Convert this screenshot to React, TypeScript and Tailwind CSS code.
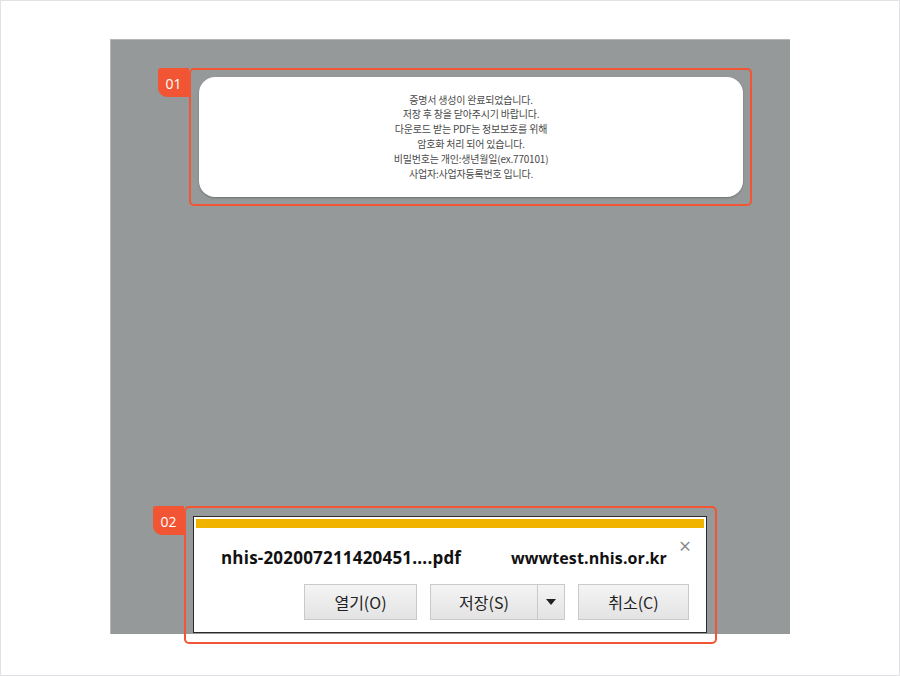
import React from "react";

const KR = { fontFamily: '"Noto Sans CJK KR", "Noto Sans", sans-serif' };
const UI = { fontFamily: '"Open Sans", "Noto Sans CJK KR", sans-serif' };

function Badge({ label }: { label: string }) {
  return (
    <div
      className="absolute -top-[2px] -left-[33px] w-[31px] h-[29px] bg-[#f25533] rounded-tl-[3px] rounded-bl-[9px] flex items-center justify-center text-white text-[14px] pt-[1px]"
      style={UI}
    >
      {label}
    </div>
  );
}

function DialogButton({ label, className = "" }: { label: string; className?: string }) {
  return (
    <div
      className={
        "h-[36px] border border-[#c9c9c9] bg-gradient-to-b from-[#f4f4f4] to-[#e3e3e3] flex items-center justify-center text-[16px] text-[#222] " +
        className
      }
      style={KR}
    >
      {label}
    </div>
  );
}

export default function App() {
  const lines = [
    "증명서 생성이 완료되었습니다.",
    "저장 후 창을 닫아주시기 바랍니다.",
    "다운로드 받는 PDF는 정보보호를 위해",
    "암호화 처리 되어 있습니다.",
    "비밀번호는 개인:생년월일(ex.770101)",
    "사업자:사업자등록번호 입니다.",
  ];

  return (
    <div className="w-[900px] h-[676px] bg-white border border-[#e2e2e4] pt-[38px] pl-[109px] overflow-hidden">
      <div className="relative w-[680px] h-[595px] bg-[#969999] border-t border-l border-[#b4b6b6]">
        {/* 01 - message card */}
        <div className="relative ml-[78px] mt-[28px] w-[563px] h-[138px] border-2 border-[#f25533] rounded-[5px] pt-[7px] pl-[8px] pr-[7px]">
          <Badge label="01" />
          <div
            className="h-[120px] bg-white rounded-[16px] shadow-[0_1px_2px_rgba(0,0,0,0.25)] flex flex-col items-center justify-center text-[10px] leading-[14.8px] text-[#4a4a4a] tracking-[-0.2px]"
            style={KR}
          >
            {lines.map((l) => (
              <div key={l}>{l}</div>
            ))}
          </div>
        </div>

        {/* 02 - download bar */}
        <div className="relative ml-[73px] mt-[300px] w-[533px] h-[138px] border-2 border-[#f25533] rounded-[5px] pt-[8px] pl-[7px]">
          <Badge label="02" />
          <div className="w-[514px] h-[117px] bg-white border border-[#2a2a2a] p-[1px] flex flex-col">
            <div className="h-[9px] bg-[#f0b400] mx-[1px] mt-[1px]" />
            <div className="relative flex items-center justify-between pl-[26px] pr-[38px] h-[40px] mt-[10px]">
              <span className="font-bold text-[17px] text-[#111] tracking-[0.2px]" style={UI}>
                nhis-202007211420451....pdf
              </span>
              <span className="font-bold text-[16px] text-[#111] tracking-[0.1px]" style={UI}>
                wwwtest.nhis.or.kr
              </span>
              <span className="absolute right-[14px] -top-[2px] text-[#8a8a8a] text-[21px] leading-none" style={UI}>
                ×
              </span>
            </div>
            <div className="flex justify-end gap-[13px] pr-[16px] mt-[6px]">
              <DialogButton label="열기(O)" className="w-[113px]" />
              <div className="flex">
                <DialogButton label="저장(S)" className="w-[107px] border-r-0" />
                <div className="h-[36px] w-[28px] border border-[#c9c9c9] bg-gradient-to-b from-[#f4f4f4] to-[#e3e3e3] flex items-center justify-center">
                  <svg width="10" height="6" viewBox="0 0 10 6">
                    <path d="M0 0 L10 0 L5 6 Z" fill="#222" />
                  </svg>
                </div>
              </div>
              <DialogButton label="취소(C)" className="w-[111px]" />
            </div>
          </div>
        </div>
      </div>
    </div>
  );
}
